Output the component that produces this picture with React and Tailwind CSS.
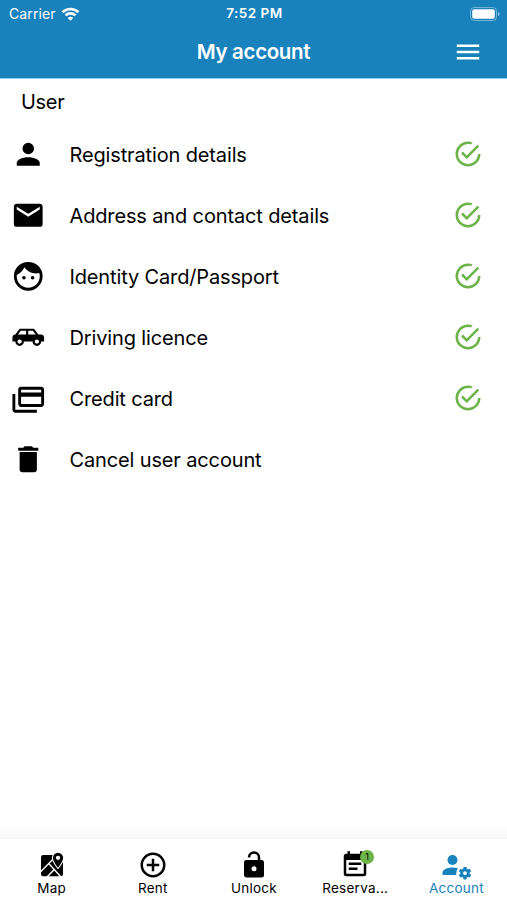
import { clsx } from "clsx";

const icons = {
  person:
    "M12,4A4,4 0 0,1 16,8A4,4 0 0,1 12,12A4,4 0 0,1 8,8A4,4 0 0,1 12,4M12,14C16.42,14 20,15.79 20,18V20H4V18C4,15.79 7.58,14 12,14Z",
  email:
    "M20,8L12,13L4,8V6L12,11L20,6M20,4H4C2.89,4 2,4.89 2,6V18A2,2 0 0,0 4,20H20A2,2 0 0,0 22,18V6C22,4.89 21.1,4 20,4Z",
  face:
    "M9,11.75A1.25,1.25 0 0,0 7.75,13A1.25,1.25 0 0,0 9,14.25A1.25,1.25 0 0,0 10.25,13A1.25,1.25 0 0,0 9,11.75M15,11.75A1.25,1.25 0 0,0 13.75,13A1.25,1.25 0 0,0 15,14.25A1.25,1.25 0 0,0 16.25,13A1.25,1.25 0 0,0 15,11.75M12,2A10,10 0 0,0 2,12A10,10 0 0,0 12,22A10,10 0 0,0 22,12A10,10 0 0,0 12,2M12,20C7.59,20 4,16.41 4,12C4,11.71 4,11.42 4.05,11.14C6.41,10.09 8.28,8.16 9.26,5.77C11.07,8.33 14.05,10 17.42,10C18.2,10 18.95,9.91 19.67,9.74C19.88,10.45 20,11.21 20,12C20,16.41 16.41,20 12,20Z",
  car:
    "M16,6L19,10H21C22.11,10 23,10.89 23,12V15H21A3,3 0 0,1 18,18A3,3 0 0,1 15,15H9A3,3 0 0,1 6,18A3,3 0 0,1 3,15H1V12C1,10.89 1.89,10 3,10L6,6H16M10.5,7.5H6.75L4.86,10H10.5V7.5M12,7.5V10H17.14L15.25,7.5H12M6,13.5A1.5,1.5 0 0,0 4.5,15A1.5,1.5 0 0,0 6,16.5A1.5,1.5 0 0,0 7.5,15A1.5,1.5 0 0,0 6,13.5M18,13.5A1.5,1.5 0 0,0 16.5,15A1.5,1.5 0 0,0 18,16.5A1.5,1.5 0 0,0 19.5,15A1.5,1.5 0 0,0 18,13.5Z",
  cards:
    "M21 8V6H7V8H21M21 16V11H7V16H21M21 4C22.11 4 23 4.89 23 6V16C23 17.11 22.11 18 21 18H7C5.89 18 5 17.11 5 16V6C5 4.89 5.9 4 7 4H21M3 20H18V22H3C1.89 22 1 21.11 1 20V9H3V20Z",
  trash:
    "M19,4H15.5L14.5,3H9.5L8.5,4H5V6H19M6,19A2,2 0 0,0 8,21H16A2,2 0 0,0 18,19V7H6V19Z",
  check:
    "M20,12A8,8 0 0,1 12,20A8,8 0 0,1 4,12A8,8 0 0,1 12,4C12.76,4 13.5,4.11 14.2,4.31L15.77,2.74C14.61,2.26 13.34,2 12,2A10,10 0 0,0 2,12A10,10 0 0,0 12,22A10,10 0 0,0 22,12M7.91,10.08L6.5,11.5L11,16L21,6L19.59,4.58L11,13.17L7.91,10.08Z",
  plus:
    "M12,20C7.59,20 4,16.41 4,12C4,7.59 7.59,4 12,4C16.41,4 20,7.59 20,12C20,16.41 16.41,20 12,20M12,2A10,10 0 0,0 2,12A10,10 0 0,0 12,22A10,10 0 0,0 22,12A10,10 0 0,0 12,2M13,7H11V11H7V13H11V17H13V13H17V11H13V7Z",
  lock:
    "M18,8A2,2 0 0,1 20,10V20A2,2 0 0,1 18,22H6C4.89,22 4,21.1 4,20V10A2,2 0 0,1 6,8H15V6A3,3 0 0,0 12,3A3,3 0 0,0 9,6H7A5,5 0 0,1 12,1A5,5 0 0,1 17,6V8H18M12,17A2,2 0 0,0 14,15A2,2 0 0,0 12,13A2,2 0 0,0 10,15A2,2 0 0,0 12,17Z",
  calendar:
    "M14,14H7V16H14M19,19H5V8H19M19,3H18V1H16V3H8V1H6V3H5C3.89,3 3,3.9 3,5V19A2,2 0 0,0 5,21H19A2,2 0 0,0 21,19V5A2,2 0 0,0 19,3M17,10H7V12H17V10Z",
  menu: "M3,6H21V8H3V6M3,11H21V13H3V11M3,16H21V18H3V16Z",
};

const Icon = ({ name, className }) => (
  <svg viewBox="0 0 24 24" fill="currentColor" className={className}>
    <path d={icons[name]} />
  </svg>
);

const MapIcon = () => (
  <svg viewBox="0 0 24 24" fill="currentColor" className="size-[30px]">
    <rect x="3.2" y="4" width="17.6" height="17" rx="1.8" />
    <g fill="none" stroke="#fff" strokeWidth="1.1">
      <path d="M2.5 17.8L10.6 9.6L13.4 6.8" />
      <path d="M9.4 10.8L19.2 21.6" />
      <path d="M8 21.6L14 15.4" />
    </g>
    <path
      d="M16.8 2.1a4.1 4.1 0 0 0-4.1 4.1c0 3 4.1 8 4.1 8s4.1-5 4.1-8a4.100 4.100 0 0 0-4.1-4.1z"
      stroke="#fff"
      strokeWidth="1.6"
      paintOrder="stroke"
    />
    <circle cx="16.8" cy="6.2" r="1.7" fill="#fff" />
  </svg>
);

const AccountIcon = () => (
  <svg viewBox="0 0 24 24" fill="currentColor" className="size-[30px] overflow-visible">
    <circle cx="9.2" cy="8" r="4" />
    <path d="M9.2 14C4.8 14 1.2 15.8 1.2 18V20H12.2C12.1 18 12.5 16 13.6 14.6C12.3 14.2 10.8 14 9.2 14Z" />
    <path
      transform="translate(1.2 1.5)"
      d="M17 12C16.87 12 16.76 12.09 16.74 12.21L16.55 13.53C16.25 13.66 15.96 13.82 15.7 14L14.46 13.5C14.35 13.5 14.22 13.5 14.15 13.63L13.15 15.36C13.09 15.47 13.11 15.6 13.21 15.68L14.27 16.5C14.25 16.67 14.24 16.83 14.24 17C14.24 17.17 14.25 17.33 14.27 17.5L13.21 18.32C13.12 18.4 13.09 18.53 13.15 18.64L14.15 20.37C14.21 20.5 14.34 20.5 14.46 20.5L15.7 20C15.96 20.18 16.24 20.35 16.55 20.47L16.74 21.79C16.76 21.91 16.86 22 17 22H19C19.11 22 19.22 21.91 19.24 21.79L19.43 20.47C19.73 20.34 20 20.18 20.27 20L21.5 20.5C21.63 20.5 21.76 20.5 21.83 20.37L22.83 18.64C22.89 18.53 22.86 18.4 22.77 18.32L21.7 17.5C21.72 17.33 21.74 17.17 21.74 17C21.74 16.83 21.73 16.67 21.7 16.5L22.76 15.68C22.85 15.6 22.88 15.47 22.82 15.36L21.82 13.63C21.76 13.5 21.63 13.5 21.5 13.5L20.27 14C20 13.82 19.73 13.65 19.42 13.53L19.23 12.21C19.22 12.09 19.11 12 19 12H17M18 15.5C18.83 15.5 19.5 16.17 19.5 17C19.5 17.83 18.83 18.5 18 18.5C17.16 18.5 16.5 17.83 16.5 17C16.5 16.17 17.17 15.5 18 15.5Z"
    />
  </svg>
);

const rows = [
  { icon: "person", label: "Registration details", done: true },
  { icon: "email", label: "Address and contact details", done: true },
  { icon: "face", label: "Identity Card/Passport", done: true },
  { icon: "car", label: "Driving licence", done: true },
  { icon: "cards", label: "Credit card", done: true },
  { icon: "trash", label: "Cancel user account" },
];

const tabs = [
  { label: "Map", icon: <MapIcon /> },
  { label: "Rent", icon: <Icon name="plus" className="size-[30px]" /> },
  { label: "Unlock", icon: <Icon name="lock" className="size-[30px]" /> },
  {
    label: "Reserva...",
    icon: <Icon name="calendar" className="size-[30px]" />,
    badge: 1,
  },
  { label: "Account", icon: <AccountIcon />, active: true },
];

const StatusBar = () => (
  <div className="grid h-[27px] grid-cols-3 items-center pl-[9px] pr-[7px] text-[14px]">
    <div className="flex items-center gap-[5px]">
      <span className="tracking-[0.1px]">Carrier</span>
      <svg viewBox="0 0 18 14" className="h-[14px] w-[19px]" fill="none" stroke="currentColor" strokeWidth="2.6">
        <path d="M1 5.2a11.5 11.5 0 0 1 16 0" />
        <path d="M4 8.4a7.2 7.2 0 0 1 10 0" />
        <path d="M9 13.8L6.3 11a4 4 0 0 1 5.4 0z" fill="currentColor" stroke="none" />
      </svg>
    </div>
    <span className="text-center text-[13.5px] font-semibold tracking-[0.5px]">7:52 PM</span>
    <svg viewBox="0 0 30 14" className="h-[14px] w-[30px] justify-self-end">
      <rect x="0.5" y="0.5" width="26" height="13" rx="3.8" fill="none" stroke="#fff" strokeOpacity="0.4" />
      <rect x="2.2" y="2.2" width="22.6" height="9.6" rx="2.2" fill="#fff" />
      <path d="M28 5v4c1-.4 1.600-1.100 1.600-2s-.6-1.600-1.600-2z" fill="#fff" fillOpacity="0.5" />
    </svg>
  </div>
);

export default function App() {
  return (
    <div className="flex h-[900px] w-[507px] flex-col overflow-hidden bg-white font-['Inter',sans-serif] text-black">
      <header className="h-[79px] shrink-0 border-b border-[#8fd0f5] bg-[#1982bd] text-white">
        <StatusBar />
        <div className="grid h-[50px] grid-cols-[1fr_auto_1fr] items-center pr-6">
          <h1 className="col-start-2 pl-6 pt-px text-[20.5px] font-semibold tracking-[-0.35px]">My account</h1>
          <button className="justify-self-end">
            <Icon name="menu" className="size-[30px]" />
          </button>
        </div>
      </header>

      <main className="flex-1">
        <h2 className="flex h-[45px] items-center pl-[21px] text-[20px] tracking-[-0.3px]">User</h2>
        <ul>
          {rows.map((row) => (
            <li key={row.label} className="flex h-[61px] items-center pl-[10.5px] pr-6">
              <Icon name={row.icon} className="size-[34.5px] shrink-0" />
              <span className="ml-[24.5px] flex-1 text-[20px] tracking-[-0.14px]">{row.label}</span>
              {row.done && <Icon name="check" className="mb-[1.5px] size-[30px] text-[#6cb348]" />}
            </li>
          ))}
        </ul>
      </main>

      <div className="h-4 bg-linear-to-b from-white to-[#f7f7f7]" />
      <nav className="grid h-[61px] shrink-0 grid-cols-5 pl-px">
        {tabs.map((tab) => (
          <div
            key={tab.label}
            className={clsx("flex flex-col items-center pt-[10.5px]", tab.active && "text-[#1982bd]")}
          >
            <div className="relative">
              {tab.icon}
              {tab.badge && (
                <span className="absolute -right-[4px] top-0 flex size-[14px] items-center justify-center rounded-full bg-[#6cb348] text-[9px] text-black">
                  {tab.badge}
                </span>
              )}
            </div>
            <span className="text-[13.5px] leading-[17px] tracking-[0.25px]">{tab.label}</span>
          </div>
        ))}
      </nav>
    </div>
  );
}
